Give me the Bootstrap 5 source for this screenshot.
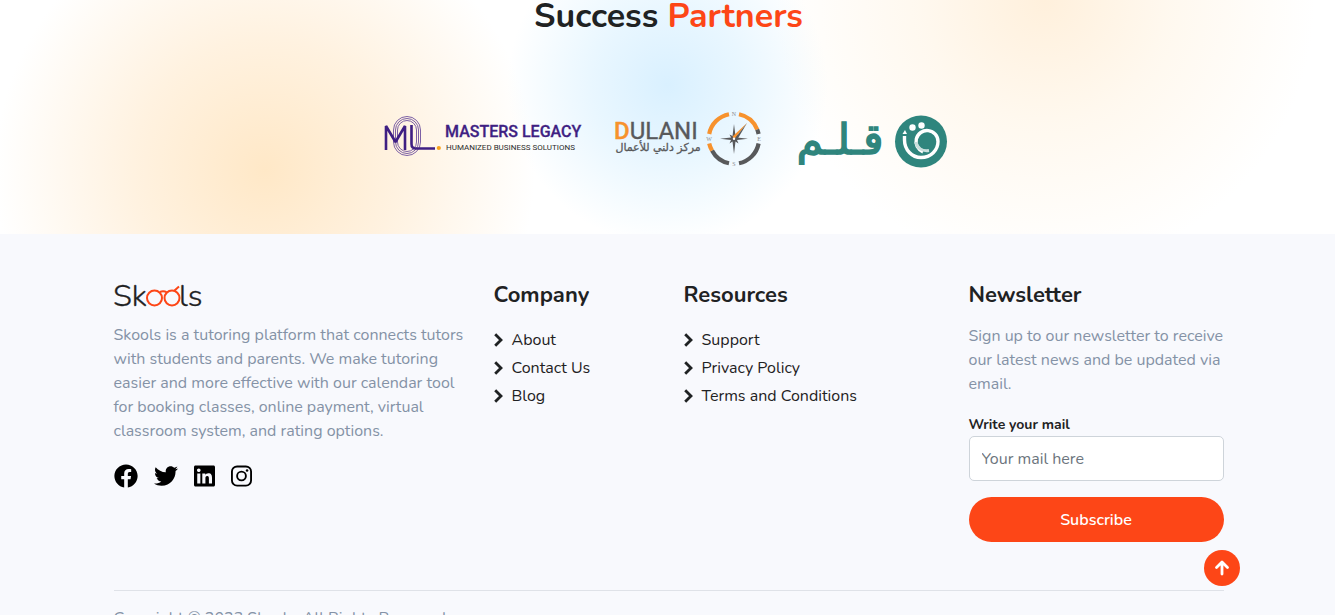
<!DOCTYPE html>
<html lang="en">
<head>
<meta charset="utf-8">
<meta name="viewport" content="width=device-width, initial-scale=1">
<title>Skools</title>
<link href="https://cdn.jsdelivr.net/npm/bootstrap@5.3.0/dist/css/bootstrap.min.css" rel="stylesheet">
<style>
body{font-family:Nunito,Lato,"Noto Sans",sans-serif;color:#1f2223;background:#f8f9fd}
.wrap{max-width:1140px;--bs-gutter-x:30px}
.wrap .row{--bs-gutter-x:30px}
.partners,.site-footer{padding-left:2px}
.partners{background:
 radial-gradient(circle at 265px 170px,#ffe8c7 0,rgba(255,233,203,.6) 130px,rgba(255,240,220,0) 270px),
 radial-gradient(circle at 50% 85px,#d9f0ff 0,rgba(218,241,255,.6) 75px,rgba(218,241,255,0) 160px),
 radial-gradient(circle at 1045px 0,#fff0dc 0,rgba(255,242,223,.5) 125px,rgba(255,242,223,0) 270px),#fff}
.title{font-size:34px;line-height:32px;font-weight:700}
.accent{color:#fd4617}
.logos{padding:79px 0 65px;gap:36px}
.logos svg,.brand-logo{overflow:visible}
.site-footer{padding-top:48px}
.muted{color:#8492a6;line-height:24px}
.brand-logo{display:block;margin-bottom:15px}
.about-text{margin-bottom:21px}
.foot-title{font-size:22px;line-height:26px;font-weight:700;margin-bottom:16px}
.foot-list{padding-top:4px}
.foot-list a{color:#1f2223;text-decoration:none;line-height:24px;gap:9px}
.foot-list li{margin-bottom:4px}
.social a{color:#000}
.news-text{margin-bottom:18px}
.mail-label{font-size:14px;line-height:21px;font-weight:700;margin-bottom:1px}
.mail-input{height:45px;border-color:#ced4da;border-radius:5px}
.mail-input::placeholder{color:#6c757d}
.btn-brand,.btn-brand:hover{height:45px;background:#fd4617;color:#fff;font-weight:600}
.totop{width:36px;height:36px;right:95px;bottom:29px;background:#fd4617;color:#fff}
.foot-bar{margin-top:48px;padding:15px 0 20px;border-top:1px solid #dfe2e8}
</style>
</head>
<body>
<section class="partners">
  <h2 class="title text-center mb-0">Success <span class="accent">Partners</span></h2>
  <div class="logos d-flex flex-wrap justify-content-center">
    <svg width="194" height="58" viewBox="0 0 194 58" role="img" aria-label="Masters Legacy">
      <g fill="none" stroke="#5a3a94" stroke-width=".8">
        <rect x="8.500" y="5.500" width="27" height="39" rx="13.500"/>
        <rect x="10.500" y="7.500" width="23" height="35" rx="11.500"/>
        <rect x="12.500" y="9.500" width="19" height="31" rx="9.500"/>
      </g>
      <g fill="none" stroke="#3f1f83" stroke-width="2.600" stroke-linejoin="bevel">
        <path d="M1 39V15L10.500 31L20 15V39"/>
        <path d="M26.500 14V33Q26.500 37.500 31 37.500H50"/>
      </g>
      <circle cx="53.800" cy="37" r="2.100" fill="#f9a11b"/>
      <text x="60" y="26" font-family="Roboto,sans-serif" font-size="16" font-weight="500" fill="#3f1f83" stroke="#3f1f83" stroke-width=".3">MASTERS LEGACY</text>
      <text x="61" y="39" font-family="Roboto,sans-serif" font-size="8" fill="#2b2b2b">HUMANIZED BUSINESS SOLUTIONS</text>
    </svg>
    <svg width="148" height="58" viewBox="0 0 148 58" role="img" aria-label="Dulani">
      <text x="-1" y="28" font-family="Roboto,sans-serif" font-size="24" fill="#58595b" stroke="#58595b" stroke-width=".4"><tspan fill="#f7922d" stroke="#f7922d" font-weight="500">D</tspan>ULANI</text>
      <text x="43" y="40" text-anchor="middle" direction="rtl" font-family="'DejaVu Sans',sans-serif" font-size="11" fill="#58595b" stroke="#58595b" stroke-width=".3">مركز دلني للأعمال</text>
      <g fill="none" stroke-width="4.200">
        <path d="M94.200 23A25 25 0 0 1 114 3.200" stroke="#f7922d"/>
        <path d="M124 3.200A25 25 0 0 1 142.200 18.500" stroke="#f7922d"/>
        <path d="M142.200 18.500A25 25 0 0 1 143.600 23" stroke="#58595b"/>
        <path d="M143.600 32.500A25 25 0 0 1 124 52.300" stroke="#58595b"/>
        <path d="M114 52.300A25 25 0 0 1 97 39.500" stroke="#58595b"/>
        <path d="M97 39.500A25 25 0 0 1 94.200 32.500" stroke="#f7922d"/>
      </g>
      <path d="M119 13L120.500 25L123.500 23.500L122 26.500L133 27.800L122 29L123.500 32.500L120.500 30.500L119 43L117.500 30.500L114.500 32.500L116 29L105 27.800L116 26.500L114.500 23.500L117.500 25Z" fill="#58595b"/>
      <path d="M132 12L117.500 25.500L119.500 28Z" fill="#f7922d"/>
      <path d="M132 12L119.500 28L122 29Z" fill="#58595b"/>
      <circle cx="119" cy="27.800" r="1.200" fill="#fff"/>
      <g font-family="'Liberation Serif',serif" font-size="6" fill="#8b8d90" text-anchor="middle"><text x="119" y="5">N</text><text x="119" y="55">S</text><text x="94" y="30">W</text><text x="144" y="30">E</text></g>
    </svg>
    <svg width="154" height="58" viewBox="0 0 154 58" role="img" aria-label="Qalam">
      <text x="41" y="43" text-anchor="middle" direction="rtl" font-family="'DejaVu Sans',sans-serif" font-size="42" fill="#2f857d" stroke="#2f857d" stroke-width="1.600">قـلـم</text>
      <circle cx="122" cy="30.500" r="26" fill="#2f857d"/>
      <g fill="#fff"><circle cx="113.500" cy="16.500" r="3.200"/><circle cx="122.500" cy="14.500" r="3.200"/></g>
      <path d="M105.500 25V29C105.500 39 113 46.500 122 46.500C132 46.500 139 39 139 30.500A11 11 0 1 0 124 40.800" fill="none" stroke="#fff" stroke-width="3.400"/>
      <path d="M117 31C118 37 123 40.500 130 39.500" fill="none" stroke="#c9dfdd" stroke-width="3"/>
      <path d="M103.500 23L106 19L108 23Z" fill="#fff"/>
    </svg>
  </div>
</section>

<footer class="site-footer">
  <div class="container wrap">
    <div class="row">
      <div class="col-lg-4">
        <svg class="brand-logo" width="90" height="26" viewBox="0 0 90 26" role="img" aria-label="Skools">
          <g font-family="Nunito,sans-serif" font-weight="300" font-size="31" fill="#1f2223" stroke="#1f2223" stroke-width=".3"><text x="-1" y="24">Sk</text><text x="65" y="24">ls</text></g>
          <g fill="none" stroke="#fd4617" stroke-width="2"><circle cx="40.500" cy="16" r="7.500"/><circle cx="58" cy="16" r="7.500"/><path d="M46 10Q49.500 8.500 53 10.500M60 9L65 4.500"/></g>
        </svg>
        <p class="muted about-text">Skools is a tutoring platform that connects tutors with students and parents. We make tutoring easier and more effective with our calendar tool for booking classes, online payment, virtual classroom system, and rating options.</p>
        <div class="social d-flex gap-3">
          <a class="d-flex" href="#" aria-label="Facebook"><svg width="24" height="24" viewBox="0 0 512 512" fill="currentColor"><path d="M504 256C504 119 393 8 256 8S8 119 8 256c0 123.780 90.690 226.380 209.250 245V327.690h-63V256h63v-54.640c0-62.150 37-96.480 93.670-96.480 27.140 0 55.520 4.840 55.520 4.840v61h-31.280c-30.800 0-40.410 19.120-40.410 38.730V256h68.780l-11 71.690h-57.780V501C413.310 482.380 504 379.780 504 256z"/></svg></a>
          <a class="d-flex" href="#" aria-label="Twitter"><svg width="24" height="24" viewBox="0 0 512 512" fill="currentColor"><path d="M459.370 151.716c.325 4.548.325 9.097.325 13.645 0 138.720-105.583 298.558-298.558 298.558-59.452 0-114.680-17.219-161.137-47.106 8.447.974 16.568 1.299 25.340 1.299 49.055 0 94.213-16.568 130.274-44.832-46.132-.975-84.792-31.188-98.112-72.772 6.498.974 12.995 1.624 19.818 1.624 9.421 0 18.843-1.300 27.614-3.573-48.081-9.747-84.143-51.980-84.143-102.985v-1.299c13.969 7.797 30.214 12.670 47.431 13.319-28.264-18.843-46.781-51.005-46.781-87.391 0-19.492 5.197-37.360 14.294-52.954 51.655 63.675 129.300 105.258 216.365 109.807-1.624-7.797-2.599-15.918-2.599-24.040 0-57.828 46.782-104.934 104.934-104.934 30.213 0 57.502 12.670 76.670 33.137 23.715-4.548 46.456-13.320 66.599-25.340-7.798 24.366-24.366 44.833-46.132 57.827 21.117-2.273 41.584-8.122 60.426-16.243-14.292 20.791-32.161 39.308-52.628 54.253z"/></svg></a>
          <a class="d-flex" href="#" aria-label="LinkedIn"><svg width="21" height="24" viewBox="0 0 448 512" fill="currentColor"><path d="M416 32H31.900C14.300 32 0 46.500 0 64.300v383.400C0 465.500 14.300 480 31.900 480H416c17.600 0 32-14.500 32-32.300V64.300c0-17.800-14.400-32.300-32-32.300zM135.400 416H69V202.200h66.500V416zm-33.200-243c-21.300 0-38.500-17.300-38.500-38.500S80.900 96 102.200 96c21.200 0 38.500 17.300 38.500 38.500 0 21.300-17.200 38.500-38.500 38.500zm282.100 243h-66.400V312c0-24.800-.5-56.700-34.500-56.700-34.600 0-39.900 27-39.900 54.900V416h-66.400V202.200h63.700v29.200h.9c8.900-16.800 30.600-34.500 62.900-34.500 67.200 0 79.700 44.300 79.700 101.900V416z"/></svg></a>
          <a class="d-flex" href="#" aria-label="Instagram"><svg width="21" height="24" viewBox="0 0 448 512" fill="none" stroke="currentColor" stroke-width="40"><rect x="20" y="52" width="408" height="408" rx="110"/><circle cx="224" cy="256" r="94"/><circle cx="343" cy="137" r="27" fill="currentColor" stroke="none"/></svg></a>
        </div>
      </div>
      <div class="col-lg-2">
        <h5 class="foot-title">Company</h5>
        <ul class="foot-list list-unstyled mb-0">
          <li><a class="d-flex align-items-center" href="#"><svg width="9" height="14" viewBox="0 0 9 14" fill="none" stroke="currentColor" stroke-width="2.800"><path d="M1.200 1.200L7 7L1.200 12.800"/></svg>About</a></li>
          <li><a class="d-flex align-items-center" href="#"><svg width="9" height="14" viewBox="0 0 9 14" fill="none" stroke="currentColor" stroke-width="2.800"><path d="M1.200 1.200L7 7L1.200 12.800"/></svg>Contact Us</a></li>
          <li><a class="d-flex align-items-center" href="#"><svg width="9" height="14" viewBox="0 0 9 14" fill="none" stroke="currentColor" stroke-width="2.800"><path d="M1.200 1.200L7 7L1.200 12.800"/></svg>Blog</a></li>
        </ul>
      </div>
      <div class="col-lg-3">
        <h5 class="foot-title">Resources</h5>
        <ul class="foot-list list-unstyled mb-0">
          <li><a class="d-flex align-items-center" href="#"><svg width="9" height="14" viewBox="0 0 9 14" fill="none" stroke="currentColor" stroke-width="2.800"><path d="M1.200 1.200L7 7L1.200 12.800"/></svg>Support</a></li>
          <li><a class="d-flex align-items-center" href="#"><svg width="9" height="14" viewBox="0 0 9 14" fill="none" stroke="currentColor" stroke-width="2.800"><path d="M1.200 1.200L7 7L1.200 12.800"/></svg>Privacy Policy</a></li>
          <li><a class="d-flex align-items-center" href="#"><svg width="9" height="14" viewBox="0 0 9 14" fill="none" stroke="currentColor" stroke-width="2.800"><path d="M1.200 1.200L7 7L1.200 12.800"/></svg>Terms and Conditions</a></li>
        </ul>
      </div>
      <div class="col-lg-3">
        <h5 class="foot-title">Newsletter</h5>
        <p class="muted news-text">Sign up to our newsletter to receive our latest news and be updated via email.</p>
        <form>
          <label class="mail-label d-block" for="mail">Write your mail</label>
          <input class="form-control mail-input mb-3" type="email" id="mail" placeholder="Your mail here">
          <button class="btn btn-brand rounded-pill w-100" type="submit">Subscribe</button>
        </form>
      </div>
    </div>
    <div class="foot-bar"><p class="muted mb-0">Copyright © 2023 Skools. All Rights Reserved.</p></div>
  </div>
</footer>
<button class="totop btn rounded-circle p-0 position-fixed d-flex align-items-center justify-content-center" type="button" aria-label="Back to top"><svg width="16" height="16" viewBox="0 0 16 16" fill="none" stroke="currentColor" stroke-width="2.800" stroke-linejoin="round" stroke-linecap="round"><path d="M8 14V2.500M2.500 7.500L8 2L13.500 7.500"/></svg></button>
<script src="https://cdn.jsdelivr.net/npm/bootstrap@5.3.0/dist/js/bootstrap.bundle.min.js"></script>
</body>
</html>
